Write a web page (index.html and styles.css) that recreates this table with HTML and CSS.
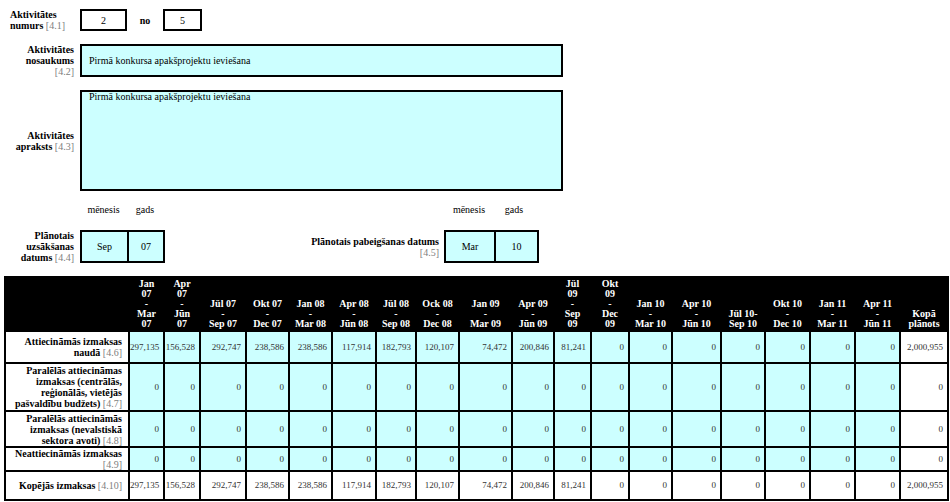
FILE: index.html
```html
<!DOCTYPE html>
<html lang="lv">
<head>
<meta charset="utf-8">
<title>Aktivitāte</title>
<link rel="stylesheet" href="styles.css">
</head>
<body>
<div class="form">
  <div class="row row-num">
    <div class="lbl lbl-left"><b>Aktivitātes<br>numurs</b> <span class="ref">[4.1]</span></div>
    <div class="num-fields">
      <div class="box box-a">2</div>
      <span class="no">no</span>
      <div class="box box-b">5</div>
    </div>
  </div>
  <div class="row row-name">
    <div class="lbl"><b>Aktivitātes<br>nosaukums</b><br><span class="ref">[4.2]</span></div>
    <div class="box cyan name-box">Pirmā konkursa apakšprojektu ieviešana</div>
  </div>
  <div class="row row-desc">
    <div class="lbl"><b>Aktivitātes<br>apraksts</b> <span class="ref">[4.3]</span></div>
    <div class="box cyan desc-box">Pirmā konkursa apakšprojektu ieviešana</div>
  </div>
  <div class="row row-dates">
    <div class="lbl lbl-start"><div><b>Plānotais<br>uzsākšanas<br>datums</b> <span class="ref">[4.4]</span></div></div>
    <div class="date">
      <div class="date-head"><span class="dh dh-m1">mēnesis</span><span class="dh dh-y1">gads</span></div>
      <div class="date-boxes"><div class="dbox dm1">Sep</div><div class="dbox dy1">07</div></div>
    </div>
    <div class="lbl lbl-end"><b>Plānotais pabeigšanas datums</b><br><span class="ref">[4.5]</span></div>
    <div class="date">
      <div class="date-head"><span class="dh dh-m2">mēnesis</span><span class="dh dh-y2">gads</span></div>
      <div class="date-boxes"><div class="dbox dm2">Mar</div><div class="dbox dy2">10</div></div>
    </div>
  </div>
</div>

<table class="costs">
  <colgroup>
    <col style="width:124px"><col style="width:35px"><col style="width:36px"><col style="width:46px"><col style="width:43px"><col style="width:43px"><col style="width:44px"><col style="width:40px"><col style="width:43px"><col style="width:53px"><col style="width:42px"><col style="width:37px"><col style="width:38px"><col style="width:43px"><col style="width:49px"><col style="width:44px"><col style="width:45px"><col style="width:45px"><col style="width:45px"><col style="width:48px">
  </colgroup>
  <thead>
    <tr class="hrow">
      <th></th>
      <th>Jan<br>07<br>-<br>Mar<br>07</th>
      <th>Apr<br>07<br>-<br>Jūn<br>07</th>
      <th>Jül 07<br>-<br>Sep 07</th>
      <th>Okt 07<br>-<br>Dec 07</th>
      <th>Jan 08<br>-<br>Mar 08</th>
      <th>Apr 08<br>-<br>Jūn 08</th>
      <th>Jül 08<br>-<br>Sep 08</th>
      <th>Ock 08<br>-<br>Dec 08</th>
      <th>Jan 09<br>-<br>Mar 09</th>
      <th>Apr 09<br>-<br>Jūn 09</th>
      <th>Jül<br>09<br>-<br>Sep<br>09</th>
      <th>Okt<br>09<br>-<br>Dec<br>09</th>
      <th>Jan 10<br>-<br>Mar 10</th>
      <th>Apr 10<br>-<br>Jūn 10</th>
      <th>Jül 10-<br>Sep 10</th>
      <th>Okt 10<br>-<br>Dec 10</th>
      <th>Jan 11<br>-<br>Mar 11</th>
      <th>Apr 11<br>-<br>Jūn 11</th>
      <th>Kopā<br>plānots</th>
    </tr>
  </thead>
  <tbody>
    <tr class="r1">
      <th><b>Attiecināmās izmaksas<br>naudā</b> <span class="ref">[4.6]</span></th>
      <td class="c">297,135</td><td class="c">156,528</td><td class="c">292,747</td><td class="c">238,586</td><td class="c">238,586</td><td class="c">117,914</td><td class="c">182,793</td><td class="c">120,107</td><td class="c">74,472</td><td class="c">200,846</td><td class="c">81,241</td><td class="c">0</td><td class="c">0</td><td class="c">0</td><td class="c">0</td><td class="c">0</td><td class="c">0</td><td class="c">0</td><td>2,000,955</td>
    </tr>
    <tr class="r2">
      <th><b>Paralēlās attiecināmas<br>izmaksas (centrālās,<br>reģionālās, vietējās<br>pašvaldību budžets)</b> <span class="ref">[4.7]</span></th>
      <td class="c">0</td><td class="c">0</td><td class="c">0</td><td class="c">0</td><td class="c">0</td><td class="c">0</td><td class="c">0</td><td class="c">0</td><td class="c">0</td><td class="c">0</td><td class="c">0</td><td class="c">0</td><td class="c">0</td><td class="c">0</td><td class="c">0</td><td class="c">0</td><td class="c">0</td><td class="c">0</td><td>0</td>
    </tr>
    <tr class="r3">
      <th><b>Paralēlās attiecināmās<br>izmaksas (nevalstiskā<br>sektora avoti)</b> <span class="ref">[4.8]</span></th>
      <td class="c">0</td><td class="c">0</td><td class="c">0</td><td class="c">0</td><td class="c">0</td><td class="c">0</td><td class="c">0</td><td class="c">0</td><td class="c">0</td><td class="c">0</td><td class="c">0</td><td class="c">0</td><td class="c">0</td><td class="c">0</td><td class="c">0</td><td class="c">0</td><td class="c">0</td><td class="c">0</td><td>0</td>
    </tr>
    <tr class="r4">
      <th><b>Neattiecināmās izmaksas</b><br><span class="ref">[4.9]</span></th>
      <td class="c">0</td><td class="c">0</td><td class="c">0</td><td class="c">0</td><td class="c">0</td><td class="c">0</td><td class="c">0</td><td class="c">0</td><td class="c">0</td><td class="c">0</td><td class="c">0</td><td class="c">0</td><td class="c">0</td><td class="c">0</td><td class="c">0</td><td class="c">0</td><td class="c">0</td><td class="c">0</td><td>0</td>
    </tr>
    <tr class="r5">
      <th><b>Kopējās izmaksas</b> <span class="ref">[4.10]</span></th>
      <td>297,135</td><td>156,528</td><td>292,747</td><td>238,586</td><td>238,586</td><td>117,914</td><td>182,793</td><td>120,107</td><td>74,472</td><td>200,846</td><td>81,241</td><td>0</td><td>0</td><td>0</td><td>0</td><td>0</td><td>0</td><td>0</td><td>2,000,955</td>
    </tr>
  </tbody>
</table>
</body>
</html>
```

FILE: styles.css
```css
html, body {
  margin: 0;
  padding: 0;
  background: #fff;
}
body {
  font-family: "Liberation Serif", "Times New Roman", serif;
  font-size: 10px;
  line-height: 11px;
  color: #000;
}
b { font-weight: bold; }
.ref { color: #808080; font-weight: normal; }

.form {
  padding-top: 9px;
}
.row {
  display: flex;
  align-items: center;
}
.lbl {
  width: 74px;
  margin-right: 6px;
  text-align: right;
  flex: none;
}
.lbl-left {
  text-align: left;
  padding-left: 10px;
  width: 64px;
}

.box {
  border: 2px solid #000;
  box-sizing: border-box;
  background: #fff;
}
.cyan { background: #ccffff; }

.num-fields {
  display: flex;
  align-items: center;
}
.box-a, .box-b {
  height: 22px;
  display: flex;
  align-items: center;
  justify-content: center;
}
.box-a { width: 47px; }
.box-b { width: 39px; }
.no {
  font-weight: bold;
  width: 36px;
  text-align: center;
}

.row-name { margin-top: 13px; }
.name-box {
  width: 483px;
  height: 33px;
  display: flex;
  align-items: center;
  padding-left: 7px;
}
.row-desc { margin-top: 13px; }
.desc-box {
  width: 483px;
  height: 101px;
  padding: 0 0 0 7px;
  line-height: 10px;
}

.row-dates {
  margin-top: 13px;
  align-items: flex-end;
}
.lbl-start {
  height: 33px;
  display: flex;
  align-items: center;
  justify-content: flex-end;
}
.lbl-end {
  width: 274px;
  margin-right: 5px;
  height: 33px;
  padding-top: 6px;
  box-sizing: border-box;
}
.date-head {
  display: flex;
  height: 26px;
  align-items: flex-start;
}
.dh { text-align: center; }
.dh-m1 { width: 47px; }
.dh-y1 { width: 36px; }
.dh-m2 { width: 50px; }
.dh-y2 { width: 40px; }
.date-boxes {
  display: flex;
  border: 2px solid #000;
  background: #ccffff;
  height: 33px;
  box-sizing: border-box;
}
.dbox {
  display: flex;
  align-items: center;
  justify-content: center;
}
.dbox + .dbox { border-left: 2px solid #000; }
.dm1 { width: 45px; }
.dy1 { width: 34px; }
.dm2 { width: 48px; }
.dy2 { width: 41px; }

.costs {
  margin: 13px 0 0 4px;
  border-collapse: collapse;
  table-layout: fixed;
  width: 943px;
}
.costs th, .costs td {
  border: 2px solid #000;
  padding: 0;
}
.hrow th {
  background: #000;
  color: #fff;
  font-weight: bold;
  text-align: center;
  vertical-align: bottom;
  line-height: 10px;
  padding: 1px 0 1px;
  height: 50px;
}
.costs tbody th {
  text-align: right;
  font-weight: normal;
  padding-right: 6px;
  white-space: nowrap;
  vertical-align: middle;
  line-height: 11px;
}
.costs td {
  text-align: right;
  padding-right: 4px;
  font-size: 9px;
  color: #333;
  vertical-align: middle;
}
.costs td.c { background: #ccffff; }
.r1 th, .r1 td { height: 30px; }
.r2 th, .r2 td { height: 46px; }
.r3 th, .r3 td { height: 34px; }
.r4 th, .r4 td { height: 19px; }
.r4 th { line-height: 9px; }
.r5 th, .r5 td { height: 27px; }
```
